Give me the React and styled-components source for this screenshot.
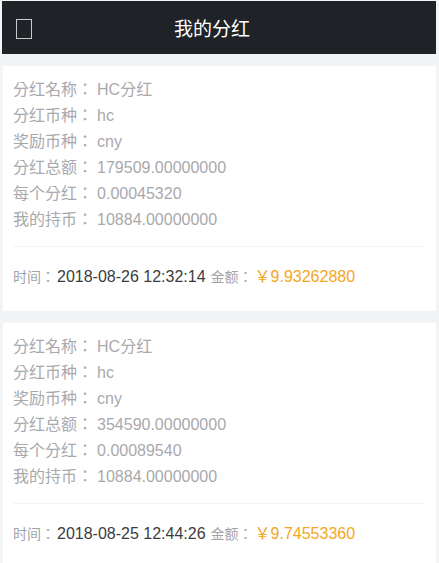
import React from "react";
import styled, {createGlobalStyle} from "styled-components";

const GlobalStyle = createGlobalStyle`
  html, body {
    margin: 0;
    padding: 0;
    background: #f3f4f6;
    font-family: "Liberation Sans", "Noto Sans CJK TC", sans-serif;
  }
`;

const Page = styled.div`
  min-height: 563px;
  padding: 1px 3px 0 2px;
  box-sizing: border-box;
  background: #f3f4f6;
`;

const Header = styled.header`
  height: 53px;
  background-color: #1f2226;
  display: flex;
  align-items: center;
  padding: 0 14px;
`;

const BackIcon = styled.span`
  width: 16px;
  height: 20px;
  border: 1.5px solid #c9cacc;
  box-sizing: border-box;
  margin-top: 3px;
`;

const Title = styled.h1`
  flex: 1;
  margin: 0;
  padding-right: 30px;
  text-align: center;
  color: #ffffff;
  font-size: 19px;
  font-weight: normal;
  font-family: "Noto Sans CJK SC", sans-serif;
`;

const List = styled.div`
  display: flex;
  flex-direction: column;
  gap: 12px;
  padding-top: 12px;
  padding-left: 1px;
`;

const Card = styled.section`
  background: #ffffff;
`;

const Info = styled.div`
  padding: 11px 0 13px;
  border-bottom: 1px solid #f4f4f4;
  margin: 0 11px 0 10px;
`;

const Row = styled.div`
  font-size: 16px;
  line-height: 26px;
  color: #a9a9ad;
  white-space: nowrap;
`;

const Key = styled.span`
  margin-right: ${p => p.$space || "4px"};
`;

const Footer = styled.div`
  padding: 17px 10px 21px;
  line-height: 26px;
  white-space: nowrap;
`;

const Label = styled.span`
  font-size: 14px;
  color: #a3a3a8;
  margin-right: 2px;
`;

const Value = styled.span`
  font-size: 16px;
  color: ${p => (p.$accent ? "#f5a623" : "#3c3c40")};
  margin-right: ${p => (p.$gap ? "5px" : "0")};
`;

const records = [
    {
        name: "HC分红",
        coin: "hc",
        reward: "cny",
        total: "179509.00000000",
        each: "0.00045320",
        hold: "10884.00000000",
        time: "2018-08-26 12:32:14",
        amount: "￥9.93262880"
    },
    {
        name: "HC分红",
        coin: "hc",
        reward: "cny",
        total: "354590.00000000",
        each: "0.00089540",
        hold: "10884.00000000",
        time: "2018-08-25 12:44:26",
        amount: "￥9.74553360"
    }
];

const fields = [
    ["分红名称", "name"],
    ["分红币种", "coin"],
    ["奖励币种", "reward"],
    ["分红总额", "total"],
    ["每个分红", "each"],
    ["我的持币", "hold"]
];

const App = () => {
    return (
        <Page>
            <GlobalStyle/>
            <Header>
                <BackIcon/>
                <Title>我的分红</Title>
            </Header>
            <List>
                {records.map((r, i) => (
                    <Card key={i}>
                        <Info>
                            {fields.map(([label, key]) => (
                                <Row key={key}>
                                    <Key>{label}：</Key>{r[key]}
                                </Row>
                            ))}
                        </Info>
                        <Footer>
                            <Label>时间：</Label>
                            <Value $gap>{r.time}</Value>
                            <Label>金额：</Label>
                            <Value $accent>{r.amount}</Value>
                        </Footer>
                    </Card>
                ))}
            </List>
        </Page>
    );
};

export default App;
